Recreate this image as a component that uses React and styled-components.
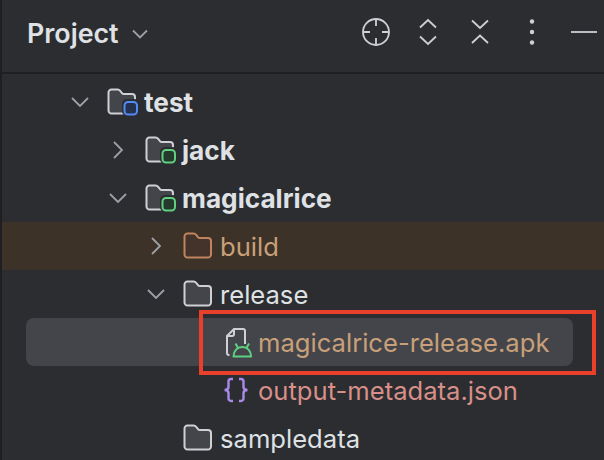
import React from "react";
import styled, { createGlobalStyle } from "styled-components";

const GlobalStyle = createGlobalStyle`
  html, body {
    margin: 0;
    padding: 0;
    background: #2b2d30;
    overflow: hidden;
  }
`;

const Panel = styled.div`
  position: relative;
  width: 604px;
  height: 460px;
  box-sizing: border-box;
  overflow: hidden;
  background: #2b2d30;
  border-left: 2px solid #1e1f22;
  font-family: Inter, "Liberation Sans", sans-serif;
`;

const Header = styled.div`
  display: flex;
  align-items: center;
  height: 74px;
  box-sizing: border-box;
  padding: 0 5px 6px 25px;
  border-bottom: 2px solid #1e1f22;
`;

const Title = styled.span`
  font-size: 26.8px;
  font-weight: 600;
  color: #dfe1e5;
`;

const TitleCaret = styled.svg`
  width: 18px;
  height: 18px;
  margin-left: 12px;
  margin-top: 2px;
`;

const Actions = styled.div`
  display: flex;
  align-items: center;
  gap: 22px;
  margin-left: auto;
  margin-bottom: 2px;
`;

const ActionIcon = styled.svg`
  display: block;
  width: 30px;
  height: 30px;
  color: #ced0d6;
`;

const Tree = styled.div`
  display: flex;
  flex-direction: column;
  padding-top: 4px;
`;

const Row = styled.div`
  display: flex;
  align-items: center;
  height: 48px;
  flex-shrink: 0;
  box-sizing: border-box;
  padding-left: ${(p) => 66 + p.$depth * 38 - (p.$selected ? 24 : 0)}px;
  margin: ${(p) => (p.$selected ? "0 31px 0 24px" : "0")};
  border-radius: ${(p) => (p.$selected ? "8px" : "0")};
  background: ${(p) => (p.$selected ? "#43454a" : p.$excluded ? "#3d3228" : "transparent")};
`;

const Chevron = styled.svg`
  width: 24px;
  height: 24px;
  flex-shrink: 0;
  color: #9da0a8;
`;

const ChevronSlot = styled.span`
  width: 24px;
  flex-shrink: 0;
`;

const NodeIcon = styled.svg`
  width: 30px;
  height: 30px;
  flex-shrink: 0;
  margin-left: 15px;
  margin-right: 7px;
  overflow: visible;
`;

const Label = styled.span`
  padding-top: 2px;
  font-size: ${(p) => (p.$bold ? "26.2px" : "25.6px")};
  line-height: 30px;
  white-space: nowrap;
  font-weight: ${(p) => (p.$bold ? 700 : 400)};
  color: ${(p) => p.$color || "#dfe1e5"};
`;

const Callout = styled.div`
  position: absolute;
  left: 197px;
  top: 310px;
  width: 397px;
  height: 65px;
  box-sizing: border-box;
  border: 4px solid #e8402a;
  pointer-events: none;
`;

const ChevronIcon = ({ open }) => (
  <Chevron viewBox="0 0 24 24" fill="none" stroke="currentColor" strokeWidth="1.800">
    <path d={open ? "M4 8l8 8 8-8" : "M8 4l8 8-8 8"} />
  </Chevron>
);

const Folder = ({ stroke = "#ced0d6", fill = "#43454a", badge, badgeFill }) => (
  <NodeIcon viewBox="0 0 30 30" fill="none">
    <path
      d="M1.500 5.500a3 3 0 0 1 3-3h6.200c1 0 1.600.4 2.300 1.200l2.200 2.600c.4.500.9.700 1.600.7h8.200a3 3 0 0 1 3 3v13.500a3 3 0 0 1-3 3h-20.500a3 3 0 0 1-3-3z"
      fill={fill}
      stroke={stroke}
      strokeWidth="2"
    />
    {badge && (
      <>
        <rect x="15" y="12" width="17" height="17" rx="5" fill="#2b2d30" />
        <rect x="17.500" y="15" width="12.500" height="12.500" rx="3.500" fill={badgeFill} stroke={badge} strokeWidth="2" />
      </>
    )}
  </NodeIcon>
);

const ApkIcon = () => (
  <NodeIcon viewBox="0 0 30 30" fill="none">
    <path
      d="M8.500 28h-.5a2 2 0 0 1-2-2V9l7-7h9a2 2 0 0 1 2 2v13M6 9h5a2 2 0 0 0 2-2V2"
      stroke="#ced0d6"
      strokeWidth="2"
    />
    <path
      d="M12.500 29.500c0-5.500 3.800-9.500 8.800-9.500s8.800 4 8.800 9.500z"
      fill="#43454a"
      stroke="#5fd07f"
      strokeWidth="2"
      strokeLinejoin="round"
    />
    <path d="M14.500 16.500l2.500 4.500M28 16.500l-2.500 4.500" stroke="#5fd07f" strokeWidth="2" />
  </NodeIcon>
);

const JsonIcon = () => (
  <NodeIcon viewBox="0 0 30 30" fill="none" stroke="#a98ae8" strokeWidth="2.400">
    <path d="M12 4h-2a2.500 2.500 0 0 0-2.500 2.500v5.500c0 2-1.500 3-4 3 2.500 0 4 1 4 3v5.500a2.500 2.500 0 0 0 2.500 2.500h2" />
    <path d="M18 4h2a2.500 2.500 0 0 1 2.500 2.500v5.500c0 2 1.500 3 4 3-2.500 0-4 1-4 3v5.500a2.500 2.500 0 0 1-2.500 2.500h-2" />
  </NodeIcon>
);

const rows = [
  { depth: 0, open: true, label: "test", bold: true, icon: <Folder badge="#548af7" badgeFill="#25324d" /> },
  { depth: 1, open: false, label: "jack", bold: true, icon: <Folder badge="#5fd07f" badgeFill="#253a2c" /> },
  { depth: 1, open: true, label: "magicalrice", bold: true, icon: <Folder badge="#5fd07f" badgeFill="#253a2c" /> },
  {
    depth: 2,
    open: false,
    label: "build",
    color: "#c9a079",
    excluded: true,
    icon: <Folder stroke="#c08560" fill="#43332a" />,
  },
  { depth: 2, open: true, label: "release", icon: <Folder /> },
  { depth: 3, label: "magicalrice-release.apk", color: "#c9a079", selected: true, icon: <ApkIcon /> },
  { depth: 3, label: "output-metadata.json", color: "#d98f89", icon: <JsonIcon /> },
  { depth: 2, label: "sampledata", icon: <Folder /> },
];

export default function App() {
  return (
    <>
      <GlobalStyle />
      <Panel>
        <Header>
          <Title>Project</Title>
          <TitleCaret viewBox="0 0 18 18" fill="none" stroke="#9da0a8" strokeWidth="1.800">
            <path d="M2 5.500l7 7 7-7" />
          </TitleCaret>
          <Actions>
            <ActionIcon viewBox="0 0 30 30" fill="none" stroke="currentColor" strokeWidth="1.800">
              <circle cx="15" cy="15" r="13" />
              <path d="M15 2v7M15 21v7M2 15h7M21 15h7" />
            </ActionIcon>
            <ActionIcon viewBox="0 0 30 30" fill="none" stroke="currentColor" strokeWidth="1.800">
              <path d="M7 10.500l8-7.500 8 7.500M7 19.500l8 7.500 8-7.500" />
            </ActionIcon>
            <ActionIcon viewBox="0 0 30 30" fill="none" stroke="currentColor" strokeWidth="1.800">
              <path d="M7 3.500l8 7.500 8-7.500M7 26l8-7.500 8 7.500" />
            </ActionIcon>
            <ActionIcon viewBox="0 0 30 30" fill="currentColor">
              <circle cx="15" cy="4.500" r="2.200" />
              <circle cx="15" cy="15" r="2.200" />
              <circle cx="15" cy="25.500" r="2.200" />
            </ActionIcon>
            <ActionIcon viewBox="0 0 30 30" fill="none" stroke="currentColor" strokeWidth="1.800">
              <path d="M2 15h26" />
            </ActionIcon>
          </Actions>
        </Header>
        <Tree>
          {rows.map((row) => (
            <Row key={row.label} $depth={row.depth} $selected={row.selected} $excluded={row.excluded}>
              {row.open === undefined ? <ChevronSlot /> : <ChevronIcon open={row.open} />}
              {row.icon}
              <Label $bold={row.bold} $color={row.color}>
                {row.label}
              </Label>
            </Row>
          ))}
        </Tree>
        <Callout />
      </Panel>
    </>
  );
}
